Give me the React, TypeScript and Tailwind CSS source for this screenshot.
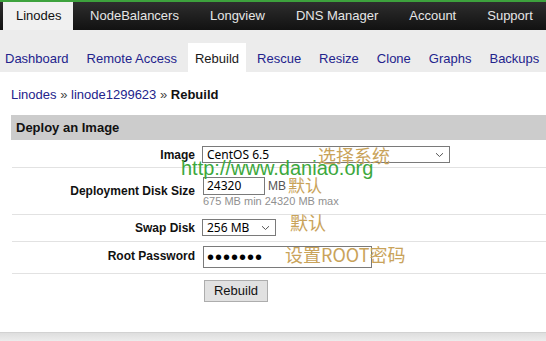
import React from "react";

const topTabs = ["NodeBalancers", "Longview", "DNS Manager", "Account", "Support"];
const subTabs = ["Dashboard", "Remote Access", "Rebuild", "Rescue", "Resize", "Clone", "Graphs", "Backups"];

function Chevron() {
  return (
    <svg width="9" height="6" viewBox="0 0 9 6" className="shrink-0">
      <path d="M1 1.2 L4.5 4.5 L8 1.2" fill="none" stroke="#555" strokeWidth="1" />
    </svg>
  );
}

function FakeSelect({ value, w }: { value: string; w: string }) {
  return (
    <div
      className={`${w} h-[17px] border border-[#7a7a7a] bg-white flex items-center justify-between pl-[4px] pr-[5px] font-['Noto_Sans',sans-serif] text-[12px] leading-[15px] text-black`}
    >
      <span className="whitespace-nowrap">{value}</span>
      <Chevron />
    </div>
  );
}

export default function App() {
  return (
    <div className="relative w-[546px] h-[341px] overflow-hidden bg-white flex flex-col font-['Liberation_Sans',Arial,sans-serif]">
      {/* top nav */}
      <div className="h-[30px] shrink-0 border-t-2 border-[#3da23d] bg-linear-to-b from-[#2e2e2e] to-[#121212] flex pl-[3px] text-[13px] leading-[16px] whitespace-nowrap">
        <div className="shrink-0 bg-[#f0f0f0] text-[#111] pl-[13px] pr-[11px] flex items-center">Linodes</div>
        <div className="flex ml-[2px] shrink-0">
          {topTabs.map((t) => (
            <div key={t} className="shrink-0 px-[15.5px] flex items-center text-[#e6e6e6]">
              {t}
            </div>
          ))}
        </div>
      </div>

      {/* sub nav */}
      <div className="h-[42px] shrink-0 bg-[#ececec] flex items-end whitespace-nowrap">
        <div className="flex shrink-0 gap-[4px] -ml-[2px] text-[13px] leading-[15px]">
          {subTabs.map((t) =>
            t === "Rebuild" ? (
              <div key={t} className="shrink-0 bg-white px-[7px] pt-[8px] pb-[6px] text-[#1a1a1a]">
                {t}
              </div>
            ) : (
              <div key={t} className="shrink-0 px-[7px] pt-[8px] pb-[6px] text-[#23238c]">
                {t}
              </div>
            )
          )}
        </div>
      </div>

      {/* content */}
      <div className="flex-1 flex flex-col">
        <div className="mt-[15px] pl-[11px] text-[13px] leading-[16px] text-[#333]">
          <span className="text-[#23238c]">Linodes</span>
          <span className="text-[#444]"> » </span>
          <span className="text-[#23238c]">linode1299623</span>
          <span className="text-[#444]"> » </span>
          <span className="font-bold text-[#111]">Rebuild</span>
        </div>

        <div className="mt-[12px] ml-[11px] h-[25px] bg-[#cccccc] pl-[5px] flex items-center text-[13px] font-bold text-[#111]">
          Deploy an Image
        </div>

        <div className="ml-[12px] text-[12px] text-[#111]">
          {/* Image */}
          <div className="grid grid-cols-[183px_1fr] gap-x-[7px] border-b border-[#e2e2e2] pt-[6px] pb-[3px]">
            <div className="flex items-center justify-end font-bold">Image</div>
            <FakeSelect value="CentOS 6.5" w="w-[248px]" />
          </div>

          {/* Disk size */}
          <div className="grid grid-cols-[183px_1fr] gap-x-[7px] border-b border-[#e2e2e2] pt-[9px] pb-[6px]">
            <div className="flex items-center justify-end font-bold pb-[3px]">Deployment Disk Size</div>
            <div className="flex flex-col pl-[1px]">
              <div className="flex items-center">
                <div className="w-[62px] h-[18px] border border-[#7a7a7a] bg-white pl-[3px] font-['Noto_Sans',sans-serif] text-[12px] leading-[16px] text-black">
                  24320
                </div>
                <span className="ml-[3px] text-[#555] text-[12px]">MB</span>
              </div>
              <div className="text-[11px] leading-[13px] text-[#909090] whitespace-nowrap">675 MB min 24320 MB max</div>
            </div>
          </div>

          {/* Swap */}
          <div className="grid grid-cols-[183px_1fr] gap-x-[7px] border-b border-[#e2e2e2] pt-[4px] pb-[4px]">
            <div className="flex items-center justify-end font-bold">Swap Disk</div>
            <FakeSelect value="256 MB" w="w-[74px]" />
          </div>

          {/* Root password */}
          <div className="grid grid-cols-[183px_1fr] gap-x-[7px] border-b border-[#e2e2e2] pt-[4px] pb-[5px]">
            <div className="flex items-center justify-end font-bold pb-[2px]">Root Password</div>
            <div className="pl-[1px]">
              <div className="w-[169px] h-[22px] border border-[#7a7a7a] bg-white pl-[3px] flex items-center text-[20px] leading-none tracking-[1px] text-black overflow-hidden">
                •••••••
              </div>
            </div>
          </div>

          {/* button */}
          <div className="grid grid-cols-[183px_1fr] gap-x-[7px] pt-[6px]">
            <div />
            <div className="pl-[2px]">
              <button className="w-[64px] h-[22px] bg-[#e1e1e1] border border-[#adadad] text-[13px] text-[#111]">
                Rebuild
              </button>
            </div>
          </div>
        </div>
      </div>

      {/* footer strip */}
      <div className="h-[9px] shrink-0 border-t border-[#d2d2d2] bg-linear-to-b from-[#dedede] to-[#ececec]" />

      {/* watermark annotations */}
      <div className="absolute left-[318px] top-[146px] text-[18px] leading-[18px] text-[#c9a35a] font-['Noto_Sans_CJK_SC',sans-serif]">
        选择系统
      </div>
      <div className="absolute left-[181px] top-[158px] text-[20px] leading-[20px] text-[#3da83d] font-['Liberation_Sans',Arial,sans-serif]">
        http://www.daniao.org
      </div>
      <div className="absolute left-[288px] top-[176px] text-[17px] leading-[17px] text-[#c9a35a] font-['Noto_Sans_CJK_SC',sans-serif]">
        默认
      </div>
      <div className="absolute left-[290px] top-[213px] text-[18px] leading-[18px] text-[#c9a35a] font-['Noto_Sans_CJK_SC',sans-serif]">
        默认
      </div>
      <div className="absolute left-[285px] top-[245px] text-[18px] leading-[18px] text-[#c9a35a] font-['Noto_Sans_CJK_SC',sans-serif]">
        设置ROOT密码
      </div>
    </div>
  );
}
